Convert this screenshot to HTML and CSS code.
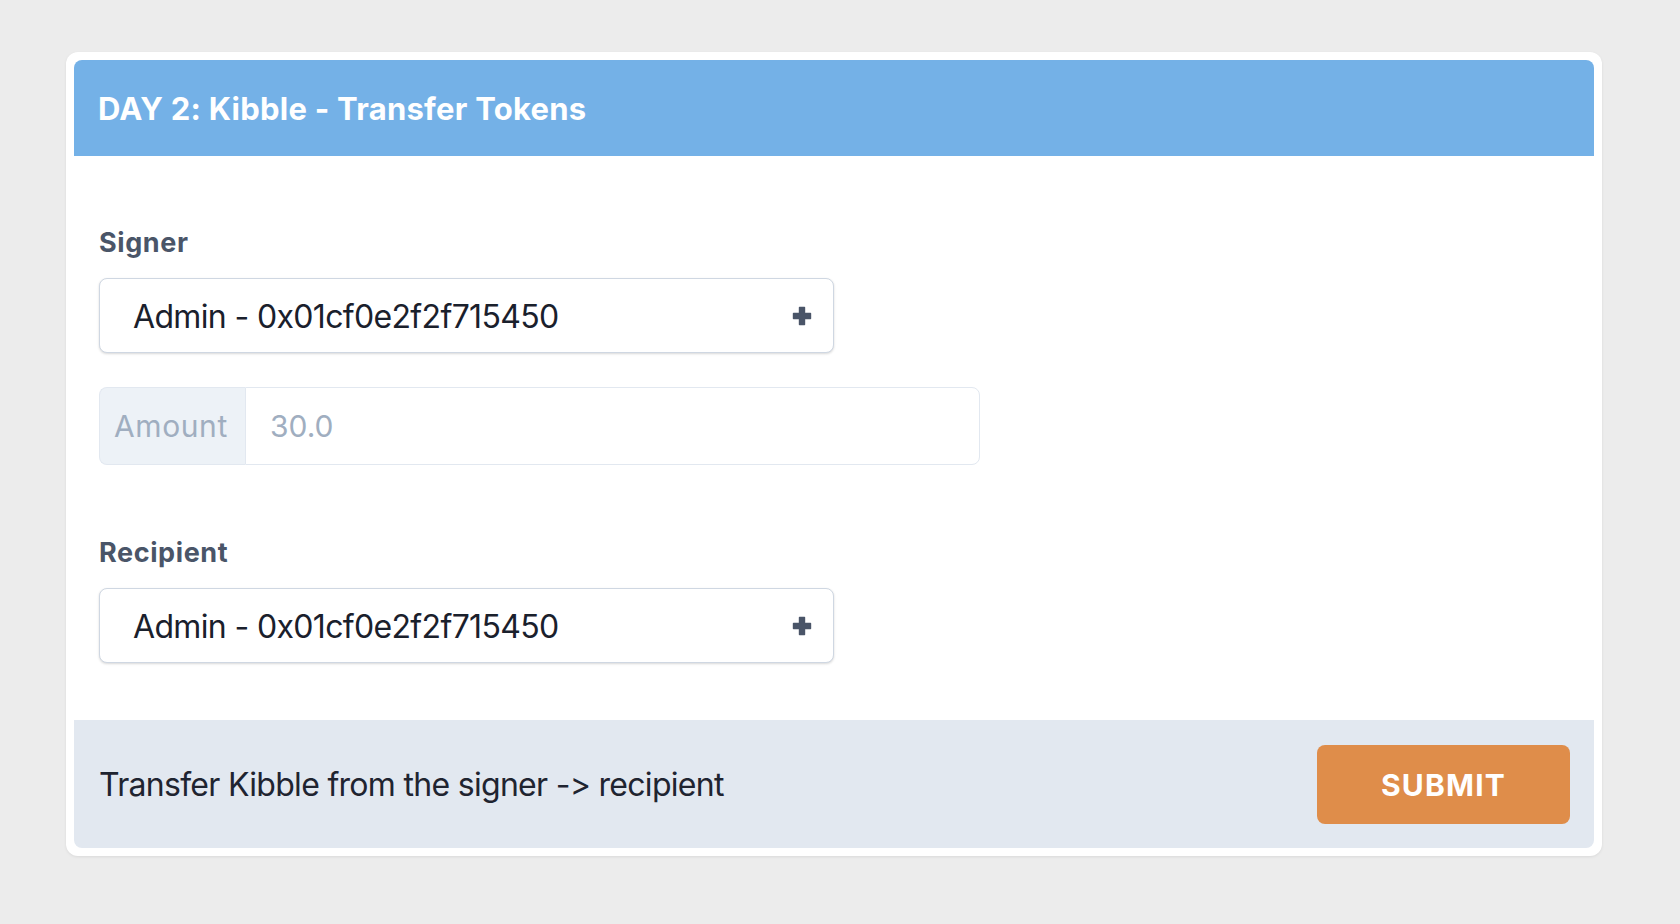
FILE: index.html
```html
<!DOCTYPE html>
<html lang="en">
<head>
<meta charset="utf-8">
<title>DAY 2: Kibble - Transfer Tokens</title>
<link rel="stylesheet" href="styles.css">
</head>
<body>
<main class="page">
  <section class="card">
    <div class="card-inner">
      <header class="card-header">
        <h1 class="card-title">DAY 2: Kibble - Transfer Tokens</h1>
      </header>
      <div class="card-body">
        <div class="field">
          <label class="field-label">Signer</label>
          <div class="select">
            <span class="select-value">Admin - 0x01cf0e2f2f715450</span>
            <svg class="select-icon" width="20" height="20" viewBox="0 0 20 20" aria-hidden="true"><path d="M7.5 1.5h5v6h6v5h-6v6h-5v-6h-6v-5h6z" fill="#4a5568" stroke="#4a5568" stroke-width="1.4" stroke-linejoin="round"/></svg>
          </div>
        </div>
        <div class="input-group">
          <span class="addon">Amount</span>
          <span class="input placeholder">30.0</span>
        </div>
        <div class="field field-recipient">
          <label class="field-label">Recipient</label>
          <div class="select">
            <span class="select-value">Admin - 0x01cf0e2f2f715450</span>
            <svg class="select-icon" width="20" height="20" viewBox="0 0 20 20" aria-hidden="true"><path d="M7.5 1.5h5v6h6v5h-6v6h-5v-6h-6v-5h6z" fill="#4a5568" stroke="#4a5568" stroke-width="1.4" stroke-linejoin="round"/></svg>
          </div>
        </div>
      </div>
      <footer class="card-footer">
        <p class="footer-text">Transfer Kibble from the signer -&gt; recipient</p>
        <button class="submit" type="button">SUBMIT</button>
      </footer>
    </div>
  </section>
</main>
</body>
</html>
```
FILE: styles.css
```css
* { box-sizing: border-box; }
html, body { margin: 0; padding: 0; }
body {
  background: #ececec;
  font-family: Inter, "Noto Sans", "Liberation Sans", sans-serif;
  font-feature-settings: "calt" 0, "liga" 0;
  font-variant-ligatures: none;
  width: 1680px;
  height: 924px;
  overflow: hidden;
}
.page {
  padding: 52px 0 0 66px;
}
.card {
  width: 1536px;
  height: 804px;
  background: #fff;
  border-radius: 12px;
  padding: 8px;
  box-shadow: 0 1px 3px rgba(0,0,0,0.08);
}
.card-inner {
  height: 100%;
  border-radius: 8px;
  overflow: hidden;
  display: flex;
  flex-direction: column;
}
.card-header {
  height: 96px;
  background: #74b1e7;
  display: flex;
  align-items: center;
  padding: 3px 24px 0;
}
.card-title {
  margin: 0;
  color: #fff;
  font-size: 31px;
  font-weight: 700;
  line-height: 1.25;
  letter-spacing: 0.25px;
}
.card-body {
  flex: 1;
  padding: 71px 25px 0;
}
.field-label {
  display: block;
  font-size: 27px;
  line-height: 32px;
  font-weight: 700;
  color: #4a5568;
  letter-spacing: 0.6px;
  margin-bottom: 19px;
}
.select {
  width: 735px;
  height: 75px;
  border: 1px solid #cfd7e2;
  border-radius: 8px;
  background: #fff;
  box-shadow: 0 1px 3px rgba(0,0,0,0.1), 0 1px 2px rgba(0,0,0,0.06);
  display: flex;
  align-items: center;
  justify-content: space-between;
  padding: 3px 21px 0 33px;
}
.select-value {
  font-size: 32px;
  line-height: 40px;
  letter-spacing: -0.65px;
  color: #1a202c;
}
.select-icon { display: block; margin-top: -2px; }
.input-group {
  margin-top: 34px;
  width: 881px;
  height: 78px;
  display: flex;
}
.addon {
  width: 146px;
  background: #edf2f7;
  border: 1px solid #e2e8f0;
  border-right: none;
  border-radius: 8px 0 0 8px;
  display: flex;
  align-items: center;
  padding: 0 10px 0 14px;
  font-size: 30px;
  letter-spacing: 0.6px;
  color: #a0aec0;
}
.input {
  flex: 1;
  border: 1px solid #e2e8f0;
  border-radius: 0 8px 8px 0;
  background: #fff;
  display: flex;
  align-items: center;
  padding: 0 24px;
  font-size: 30px;
}
.placeholder { color: #a0aec0; }
.field-recipient { margin-top: 72px; }
.card-footer {
  height: 128px;
  background: #e2e8f0;
  display: flex;
  align-items: center;
  justify-content: space-between;
  padding: 0 24px 0 25px;
}
.footer-text {
  margin: 0;
  font-size: 32px;
  letter-spacing: -0.7px;
  color: #1f2430;
}
.submit {
  width: 253px;
  height: 79px;
  border: none;
  border-radius: 8px;
  background: #df8d4a;
  color: #fff;
  font-family: inherit;
  font-size: 30px;
  font-weight: 700;
  letter-spacing: 1.2px;
  padding: 2px 0 0;
}
```
